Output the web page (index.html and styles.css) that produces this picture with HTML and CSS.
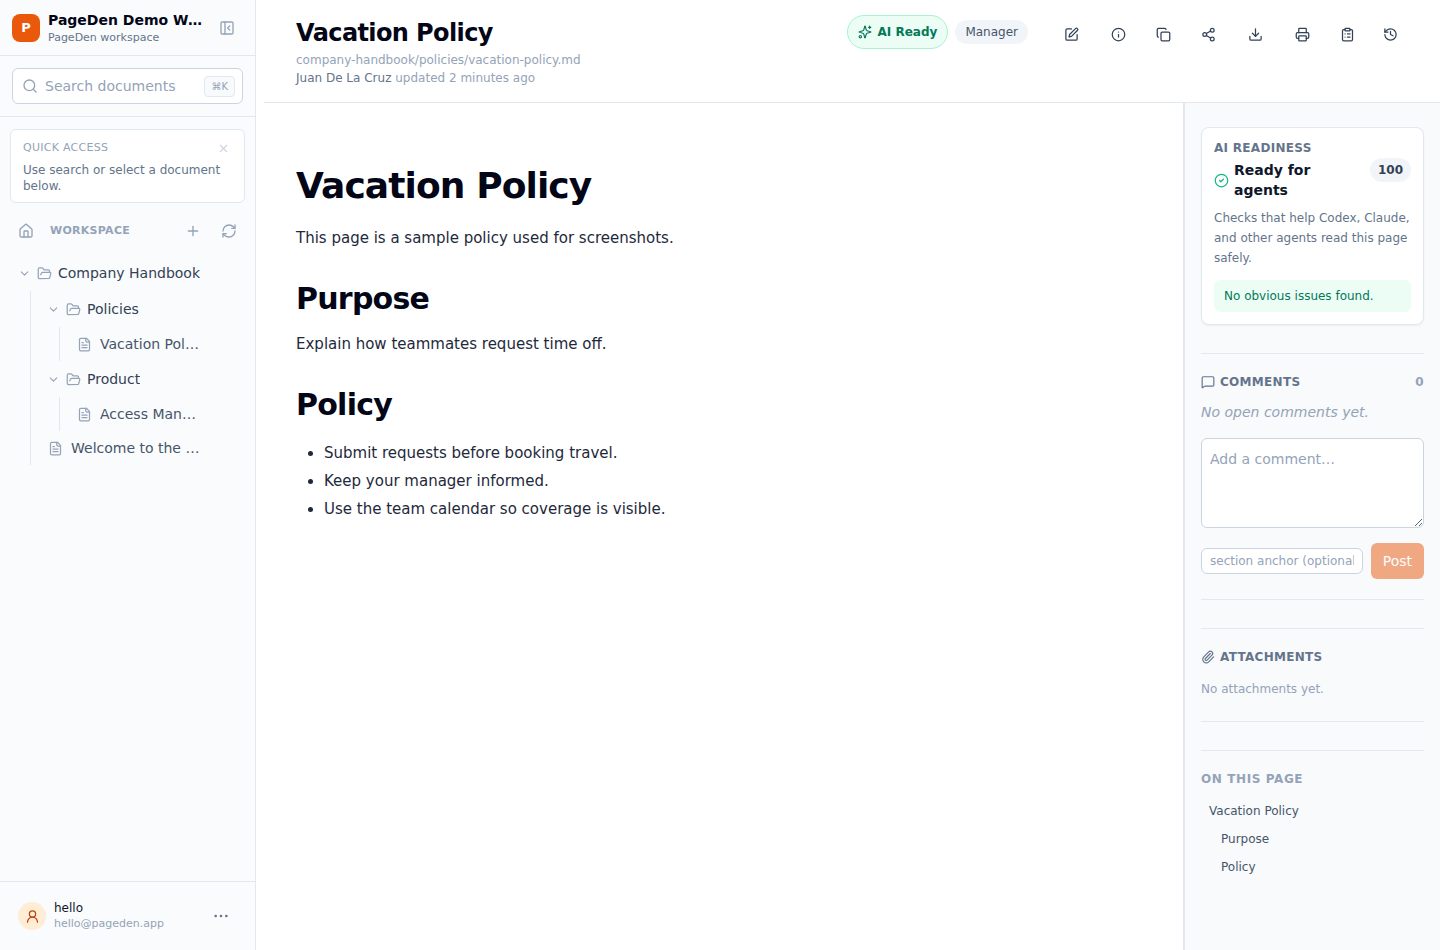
FILE: index.html
```html
<!DOCTYPE html>
<html lang="en">

<head>
    <meta charset="UTF-8">
    <meta name="viewport" content="width=device-width, initial-scale=1.0">
    <title>Vacation Policy - PageDen</title>
    <link rel="stylesheet" href="styles.css">
</head>

<body>
    <!-- Shared icon shapes -->
    <svg class="icon-defs" aria-hidden="true">
        <symbol id="chevron" viewBox="0 0 24 24"><path d="m6 9 6 6 6-6"/></symbol>
        <symbol id="folder" viewBox="0 0 24 24"><path d="m6 14 1.5-2.9A2 2 0 0 1 9.24 10H20a2 2 0 0 1 1.94 2.5l-1.54 6a2 2 0 0 1-1.95 1.5H4a2 2 0 0 1-2-2V5a2 2 0 0 1 2-2h3.9a2 2 0 0 1 1.69.9l.81 1.2a2 2 0 0 0 1.67.9H18a2 2 0 0 1 2 2v2"/></symbol>
        <symbol id="file" viewBox="0 0 24 24"><path d="M15 2H6a2 2 0 0 0-2 2v16a2 2 0 0 0 2 2h12a2 2 0 0 0 2-2V7Z"/><path d="M14 2v4a2 2 0 0 0 2 2h4"/><path d="M10 9H8"/><path d="M16 13H8"/><path d="M16 17H8"/></symbol>
    </svg>

    <div class="app">
        <!-- Left sidebar -->
        <aside class="sidebar">
            <div class="brand">
                <span class="brand-logo">P</span>
                <div class="brand-text">
                    <div class="brand-name">PageDen Demo Workspace</div>
                    <div class="brand-sub">PageDen workspace</div>
                </div>
                <button type="button" class="icon-btn" aria-label="Collapse sidebar">
                    <svg class="icon" viewBox="0 0 24 24"><rect width="18" height="18" x="3" y="3" rx="2"/><path d="M9 3v18"/><path d="m16 15-3-3 3-3"/></svg>
                </button>
            </div>

            <div class="search">
                <label class="search-box">
                    <svg class="icon" viewBox="0 0 24 24"><circle cx="11" cy="11" r="8"/><path d="m21 21-4.3-4.3"/></svg>
                    <input type="search" placeholder="Search documents" aria-label="Search documents">
                    <kbd>⌘K</kbd>
                </label>
            </div>

            <nav class="nav">
                <div class="quick">
                    <div class="quick-head">
                        <span>QUICK ACCESS</span>
                        <button type="button" class="quick-close" aria-label="Close quick access">
                            <svg class="icon icon-sm" viewBox="0 0 24 24"><path d="M18 6 6 18"/><path d="m6 6 12 12"/></svg>
                        </button>
                    </div>
                    <p>Use search or select a document below.</p>
                </div>

                <div class="workspace">
                    <button type="button" class="icon-btn" aria-label="Home">
                        <svg class="icon" viewBox="0 0 24 24"><path d="M15 21v-8a1 1 0 0 0-1-1h-4a1 1 0 0 0-1 1v8"/><path d="M3 10a2 2 0 0 1 .709-1.528l7-5.999a2 2 0 0 1 2.582 0l7 5.999A2 2 0 0 1 21 10v9a2 2 0 0 1-2 2H5a2 2 0 0 1-2-2z"/></svg>
                    </button>
                    <span class="workspace-title">WORKSPACE</span>
                    <button type="button" class="icon-btn" aria-label="New document">
                        <svg class="icon" viewBox="0 0 24 24"><path d="M5 12h14"/><path d="M12 5v14"/></svg>
                    </button>
                    <button type="button" class="icon-btn" aria-label="Refresh">
                        <svg class="icon" viewBox="0 0 24 24"><path d="M3 12a9 9 0 0 1 9-9 9.75 9.75 0 0 1 6.74 2.74L21 8"/><path d="M21 3v5h-5"/><path d="M21 12a9 9 0 0 1-9 9 9.75 9.75 0 0 1-6.74-2.74L3 16"/><path d="M8 16H3v5"/></svg>
                    </button>
                </div>

                <ul class="tree">
                    <li>
                        <button type="button" class="folder">
                            <svg class="icon icon-sm"><use href="#chevron"/></svg>
                            <svg class="icon"><use href="#folder"/></svg>
                            <span>Company Handbook</span>
                        </button>
                        <ul class="branch">
                            <li>
                                <button type="button" class="folder">
                                    <svg class="icon icon-sm"><use href="#chevron"/></svg>
                                    <svg class="icon"><use href="#folder"/></svg>
                                    <span>Policies</span>
                                </button>
                                <ul class="branch">
                                    <li><a href="#" class="file"><svg class="icon"><use href="#file"/></svg><span>Vacation Policy</span></a></li>
                                </ul>
                            </li>
                            <li>
                                <button type="button" class="folder">
                                    <svg class="icon icon-sm"><use href="#chevron"/></svg>
                                    <svg class="icon"><use href="#folder"/></svg>
                                    <span>Product</span>
                                </button>
                                <ul class="branch">
                                    <li><a href="#" class="file"><svg class="icon"><use href="#file"/></svg><span>Access Management</span></a></li>
                                </ul>
                            </li>
                            <li><a href="#" class="file"><svg class="icon"><use href="#file"/></svg><span>Welcome to the Handbook</span></a></li>
                        </ul>
                    </li>
                </ul>
            </nav>

            <div class="account">
                <span class="avatar">
                    <svg class="icon" viewBox="0 0 24 24"><circle cx="12" cy="8" r="5"/><path d="M20 21a8 8 0 0 0-16 0"/></svg>
                </span>
                <div class="account-text">
                    <div class="account-name">hello</div>
                    <div class="account-mail">hello@pageden.app</div>
                </div>
                <button type="button" class="icon-btn account-more" aria-label="Account menu">
                    <svg class="icon" viewBox="0 0 24 24"><circle cx="12" cy="12" r="1"/><circle cx="20" cy="12" r="1"/><circle cx="4" cy="12" r="1"/></svg>
                </button>
            </div>
        </aside>

        <!-- Document -->
        <div class="page">
            <header class="page-header">
                <div class="page-info">
                    <h1>Vacation Policy</h1>
                    <div class="page-path">company-handbook/policies/vacation-policy.md</div>
                    <div class="page-meta"><span>Juan De La Cruz</span> updated 2 minutes ago</div>
                </div>
                <div class="tags">
                    <button type="button" class="tag-ai">
                        <svg class="icon icon-md" viewBox="0 0 24 24"><path d="M9.937 15.5A2 2 0 0 0 8.5 14.063l-6.135-1.582a.5.5 0 0 1 0-.962L8.5 9.936A2 2 0 0 0 9.937 8.5l1.582-6.135a.5.5 0 0 1 .963 0L14.063 8.5A2 2 0 0 0 15.5 9.937l6.135 1.581a.5.5 0 0 1 0 .964L15.5 14.063a2 2 0 0 0-1.437 1.437l-1.582 6.135a.5.5 0 0 1-.963 0z"/><path d="M20 2v4"/><path d="M22 4h-4"/><circle cx="4" cy="20" r="2"/></svg>
                        AI Ready
                    </button>
                    <span class="tag-role">Manager</span>
                </div>
                <div class="tools">
                    <button type="button" class="tool tool-wide" aria-label="Edit">
                        <svg class="icon" viewBox="0 0 24 24"><path d="M12 3H5a2 2 0 0 0-2 2v14a2 2 0 0 0 2 2h14a2 2 0 0 0 2-2v-7"/><path d="M18.375 2.625a1 1 0 0 1 3 3l-9.013 9.014a2 2 0 0 1-.853.505l-2.873.84a.5.5 0 0 1-.62-.62l.84-2.873a2 2 0 0 1 .506-.852z"/></svg>
                    </button>
                    <button type="button" class="tool tool-wide" aria-label="Details">
                        <svg class="icon" viewBox="0 0 24 24"><circle cx="12" cy="12" r="10"/><path d="M12 16v-4"/><path d="M12 8h.01"/></svg>
                    </button>
                    <button type="button" class="tool" aria-label="Copy">
                        <svg class="icon" viewBox="0 0 24 24"><rect width="14" height="14" x="8" y="8" rx="2"/><path d="M4 16c-1.1 0-2-.9-2-2V4c0-1.1.9-2 2-2h10c1.1 0 2 .9 2 2"/></svg>
                    </button>
                    <button type="button" class="tool tool-wide" aria-label="Share">
                        <svg class="icon" viewBox="0 0 24 24"><circle cx="18" cy="5" r="3"/><circle cx="6" cy="12" r="3"/><circle cx="18" cy="19" r="3"/><path d="m8.59 13.51 6.83 3.98"/><path d="m15.41 6.51-6.82 3.98"/></svg>
                    </button>
                    <button type="button" class="tool tool-wide" aria-label="Download">
                        <svg class="icon" viewBox="0 0 24 24"><path d="M21 15v4a2 2 0 0 1-2 2H5a2 2 0 0 1-2-2v-4"/><path d="m7 10 5 5 5-5"/><path d="M12 15V3"/></svg>
                    </button>
                    <button type="button" class="tool tool-wide" aria-label="Print">
                        <svg class="icon" viewBox="0 0 24 24"><path d="M6 18H4a2 2 0 0 1-2-2v-5a2 2 0 0 1 2-2h16a2 2 0 0 1 2 2v5a2 2 0 0 1-2 2h-2"/><path d="M6 9V3a1 1 0 0 1 1-1h10a1 1 0 0 1 1 1v6"/><rect x="6" y="14" width="12" height="8" rx="1"/></svg>
                    </button>
                    <button type="button" class="tool" aria-label="Audit log">
                        <svg class="icon" viewBox="0 0 24 24"><rect width="8" height="4" x="8" y="2" rx="1"/><path d="M16 4h2a2 2 0 0 1 2 2v14a2 2 0 0 1-2 2H6a2 2 0 0 1-2-2V6a2 2 0 0 1 2-2h2"/><path d="M12 11h4"/><path d="M12 16h4"/><path d="M8 11h.01"/><path d="M8 16h.01"/></svg>
                    </button>
                    <button type="button" class="tool" aria-label="History">
                        <svg class="icon" viewBox="0 0 24 24"><path d="M3 12a9 9 0 1 0 9-9 9.75 9.75 0 0 0-6.74 2.74L3 8"/><path d="M3 3v5h5"/><path d="M12 7v5l4 2"/></svg>
                    </button>
                </div>
            </header>

            <div class="page-body">
                <main class="doc">
                    <h1 id="vacation-policy">Vacation Policy</h1>
                    <p>This page is a sample policy used for screenshots.</p>
                    <h2 id="purpose">Purpose</h2>
                    <p>Explain how teammates request time off.</p>
                    <h2 id="policy">Policy</h2>
                    <ul>
                        <li>Submit requests before booking travel.</li>
                        <li>Keep your manager informed.</li>
                        <li>Use the team calendar so coverage is visible.</li>
                    </ul>
                </main>

                <aside class="rail">
                    <section class="card">
                        <div class="card-head">
                            <div>
                                <h2 class="label">AI READINESS</h2>
                                <div class="card-status">
                                    <svg class="icon" viewBox="0 0 24 24"><circle cx="12" cy="12" r="10"/><path d="m9 12 2 2 4-4"/></svg>
                                    <span>Ready for agents</span>
                                </div>
                            </div>
                            <span class="score">100</span>
                        </div>
                        <p class="card-text">Checks that help Codex, Claude, and other agents read this page safely.</p>
                        <p class="card-ok">No obvious issues found.</p>
                    </section>

                    <section class="panel">
                        <h2 class="label">
                            <svg class="icon icon-md" viewBox="0 0 24 24"><path d="M22 17a2 2 0 0 1-2 2H6.828a2 2 0 0 0-1.414.586l-2.202 2.202A.71.71 0 0 1 2 21.286V5a2 2 0 0 1 2-2h16a2 2 0 0 1 2 2z"/></svg>
                            COMMENTS
                            <span class="count">0</span>
                        </h2>
                        <p class="empty">No open comments yet.</p>
                        <form class="comment-form">
                            <textarea placeholder="Add a comment…" aria-label="Add a comment"></textarea>
                            <div class="comment-row">
                                <input type="text" placeholder="section anchor (optional)" aria-label="Section anchor">
                                <button type="submit" disabled>Post</button>
                            </div>
                        </form>
                    </section>

                    <section class="panel">
                        <h2 class="label">
                            <svg class="icon icon-md" viewBox="0 0 24 24"><path d="m16 6-8.414 8.586a2 2 0 0 0 2.829 2.829l8.414-8.586a4 4 0 1 0-5.657-5.657l-8.379 8.551a6 6 0 1 0 8.485 8.485l8.379-8.551"/></svg>
                            ATTACHMENTS
                        </h2>
                        <p class="attachments">No attachments yet.</p>
                    </section>

                    <nav class="panel toc">
                        <h2 class="label toc-title">ON THIS PAGE</h2>
                        <a href="#vacation-policy">Vacation Policy</a>
                        <a href="#purpose" class="toc-sub">Purpose</a>
                        <a href="#policy" class="toc-sub">Policy</a>
                    </nav>
                </aside>
            </div>
        </div>
    </div>
</body>

</html>
```

FILE: styles.css
```css
* {
    box-sizing: border-box;
}

body {
    margin: 0;
    font-family: "DejaVu Sans", sans-serif;
    font-size: 14px;
    line-height: 20px;
    color: #0f172a;
    background: #fff;
}

h1,
h2,
p,
ul {
    margin: 0;
    padding: 0;
}

button,
input,
textarea {
    font-family: inherit;
    color: inherit;
}

button {
    padding: 0;
    border: none;
    background: none;
    cursor: pointer;
}

input::placeholder,
textarea::placeholder {
    color: #94a3b8;
    opacity: 1;
}

/* Icons */
.icon-defs {
    display: none;
}

.icon {
    display: block;
    flex: none;
    width: 15px;
    height: 15px;
    fill: none;
    stroke: currentColor;
    stroke-width: 2;
    stroke-linecap: round;
    stroke-linejoin: round;
}

.icon-sm {
    width: 13px;
    height: 13px;
}

.icon-md {
    width: 14px;
    height: 14px;
}

.icon-btn {
    display: flex;
    flex: none;
    align-items: center;
    justify-content: center;
    width: 32px;
    height: 32px;
    color: #94a3b8;
}

.icon-btn .icon,
.search-box .icon {
    width: 16px;
    height: 16px;
}

/* Layout */
.app {
    display: flex;
    height: 100vh;
}

.sidebar {
    display: flex;
    flex: none;
    flex-direction: column;
    width: 256px;
    border-right: 1px solid #e2e8f0;
    background: #fafbfd;
}

/* Workspace brand */
.brand {
    display: flex;
    align-items: center;
    gap: 8px;
    padding: 10px 12px;
    border-bottom: 1px solid #e2e8f0;
}

.brand-logo {
    display: flex;
    flex: none;
    align-items: center;
    justify-content: center;
    width: 28px;
    height: 28px;
    border-radius: 8px;
    background: #ea580c;
    color: #fff;
    font-size: 13px;
    font-weight: 700;
}

.brand-text {
    flex: 1;
    min-width: 0;
}

.brand-name {
    overflow: hidden;
    color: #020617;
    font-weight: 700;
    text-overflow: ellipsis;
    white-space: nowrap;
}

.brand-sub {
    color: #64748b;
    font-size: 11px;
    line-height: 15px;
}

/* Search */
.search {
    padding: 12px;
    border-bottom: 1px solid #e2e8f0;
}

.search-box {
    display: flex;
    align-items: center;
    gap: 7px;
    height: 36px;
    padding: 0 7px 0 9px;
    border: 1px solid #cbd5e1;
    border-radius: 6px;
    background: #fff;
    color: #94a3b8;
}

.search-box input {
    flex: 1;
    min-width: 0;
    padding: 0;
    border: none;
    outline: none;
    background: none;
    font-size: 14px;
}

.search-box kbd {
    padding: 2px 6px;
    border: 1px solid #e2e8f0;
    border-radius: 4px;
    background: #f8fafc;
    font-family: inherit;
    font-size: 10px;
    line-height: 15px;
}

/* Navigation */
.nav {
    flex: 1;
    min-height: 0;
    padding: 12px 10px;
    overflow: hidden;
}

.quick {
    padding: 9px 12px 8px;
    border: 1px solid #e2e8f0;
    border-radius: 6px;
    background: #fff;
    color: #64748b;
    font-size: 12px;
    line-height: 16px;
}

.quick-head {
    display: flex;
    align-items: center;
    justify-content: space-between;
    margin-bottom: 5px;
    color: #94a3b8;
    font-size: 11px;
    line-height: 18px;
    letter-spacing: 0.025em;
}

.quick-close {
    padding: 2px;
    color: #cbd5e1;
}

.workspace {
    display: flex;
    align-items: center;
    gap: 4px;
    margin: 12px 0 8px;
}

.workspace-title {
    flex: 1;
    padding-left: 4px;
    color: #94a3b8;
    font-size: 11px;
    font-weight: 700;
    letter-spacing: 0.025em;
}

/* Document tree */
.tree,
.branch {
    list-style: none;
}

.branch {
    margin-left: 20px;
    padding-left: 8px;
    border-left: 1px solid #e2e8f0;
}

.folder,
.file {
    display: flex;
    align-items: center;
    width: 100%;
    padding: 0 44px 0 8px;
    font-size: 14px;
    line-height: 20px;
    text-align: left;
    text-decoration: none;
}

.folder {
    gap: 6px;
    height: 36px;
    color: #334155;
}

.file {
    gap: 8px;
    height: 34px;
    padding-left: 9px;
    color: #475569;
}

.folder .icon,
.file .icon {
    color: #94a3b8;
}

.folder span,
.file span {
    overflow: hidden;
    text-overflow: ellipsis;
    white-space: nowrap;
}

/* Account */
.account {
    display: flex;
    align-items: center;
    gap: 8px;
    padding: 18px;
    border-top: 1px solid #e2e8f0;
}

.avatar {
    display: flex;
    align-items: center;
    justify-content: center;
    width: 28px;
    height: 28px;
    border-radius: 50%;
    background: #ffedd5;
    color: #c2410c;
}

.account-text {
    flex: 1;
    min-width: 0;
}

.account-name {
    font-size: 12px;
    line-height: 16px;
}

.account-mail {
    color: #94a3b8;
    font-size: 11px;
    line-height: 16px;
}

.account-more {
    color: #64748b;
}

/* Page header */
.page {
    display: flex;
    flex: 1;
    flex-direction: column;
    min-width: 0;
    margin-left: 8px;
}

.page-header {
    display: flex;
    align-items: flex-start;
    padding: 16px 32px;
    border-bottom: 1px solid #e2e8f0;
}

.page-info {
    flex: 1;
    min-width: 0;
    color: #94a3b8;
    font-size: 12px;
    line-height: 16px;
}

.page-info h1 {
    color: #020617;
    font-size: 24px;
    line-height: 34px;
    letter-spacing: -0.025em;
}

.page-path {
    margin: 2px 0;
}

.page-meta span {
    color: #64748b;
}

.tags {
    display: flex;
    align-items: center;
    gap: 7px;
    height: 32px;
    margin-right: 24px;
    font-size: 12px;
    line-height: 16px;
}

.tag-ai {
    display: flex;
    align-items: center;
    gap: 6px;
    height: 34px;
    padding: 0 10px;
    border: 1px solid #a7f3d0;
    border-radius: 17px;
    background: #ecfdf5;
    color: #047857;
    font-size: 12px;
    font-weight: 700;
}

.tag-role {
    padding: 4px 10px;
    border-radius: 12px;
    background: #f1f5f9;
    color: #475569;
}

.tools {
    display: flex;
    gap: 8px;
}

.tool {
    height: 36px;
    padding: 0 10px;
    color: #334155;
}

.tool-wide {
    padding: 0 12px;
}

/* Document text */
.page-body {
    display: flex;
    flex: 1;
    min-height: 0;
}

.doc {
    flex: 1;
    min-width: 0;
    padding: 61px 32px;
    border-right: 1px solid #e2e8f0;
    color: #1e293b;
    font-size: 15px;
    line-height: 28px;
    overflow: auto;
}

.doc h1,
.doc h2 {
    color: #020617;
    letter-spacing: -0.025em;
}

.doc h1 {
    margin-bottom: 16px;
    font-size: 36px;
    line-height: 44px;
}

.doc h2 {
    margin: 28px 0 13px;
    font-size: 30px;
    line-height: 37px;
}

.doc ul {
    margin-top: 16px;
    padding-left: 28px;
}

/* Right rail */
.rail {
    flex: none;
    width: 256px;
    padding: 24px 16px;
    border-left: 1px solid #e2e8f0;
    background: #f8fafc;
    font-size: 12px;
    line-height: 16px;
    overflow: auto;
}

.label {
    display: flex;
    align-items: center;
    gap: 5px;
    color: #64748b;
    font-size: 12px;
    line-height: 16px;
    letter-spacing: 0.025em;
}

.card {
    padding: 12px;
    border: 1px solid #e2e8f0;
    border-radius: 8px;
    background: #fff;
    box-shadow: 0 1px 2px rgba(0, 0, 0, 0.05);
}

.card-head {
    display: flex;
    align-items: center;
    justify-content: space-between;
    gap: 12px;
}

.card-status {
    display: flex;
    align-items: center;
    gap: 5px;
    margin-top: 4px;
    font-size: 14px;
    font-weight: 700;
    line-height: 20px;
}

.card-status .icon {
    color: #10b981;
}

.score {
    padding: 4px 8px;
    border-radius: 12px;
    background: #f1f5f9;
    color: #334155;
    font-weight: 700;
}

.card-text {
    margin: 8px 0 12px;
    color: #64748b;
    line-height: 20px;
}

.card-ok {
    padding: 8px 10px;
    border-radius: 6px;
    background: #ecfdf5;
    color: #047857;
}

.panel {
    margin-top: 28px;
    padding: 20px 0;
    border-top: 1px solid #e2e8f0;
    border-bottom: 1px solid #e2e8f0;
}

.count {
    margin-left: auto;
    color: #94a3b8;
}

.empty {
    margin: 12px 0 16px;
    color: #94a3b8;
    font-size: 14px;
    font-style: italic;
    line-height: 20px;
}

.comment-form textarea {
    display: block;
    width: 100%;
    height: 90px;
    padding: 10px 8px;
    border: 1px solid #cbd5e1;
    border-radius: 6px;
    background: #fff;
    font-size: 14px;
    line-height: 20px;
    resize: vertical;
}

.comment-row {
    display: flex;
    align-items: center;
    gap: 8px;
    margin-top: 15px;
}

.comment-row input {
    flex: 1;
    min-width: 0;
    height: 26px;
    padding: 4px 8px;
    border: 1px solid #cbd5e1;
    border-radius: 6px;
    background: #fff;
    font-size: 12px;
}

.comment-row button {
    height: 36px;
    padding: 0 12px;
    border-radius: 6px;
    background: #ea580c;
    color: #fff;
    font-size: 14px;
    opacity: 0.5;
}

.attachments {
    padding: 16px 0 4px;
    color: #94a3b8;
}

/* Table of contents */
.toc {
    border-bottom: none;
}

.toc-title {
    margin-bottom: 10px;
    color: #94a3b8;
    letter-spacing: 0.05em;
}

.toc a {
    display: block;
    padding: 6px 8px;
    color: #475569;
    text-decoration: none;
}

.toc .toc-sub {
    padding-left: 20px;
}
```
